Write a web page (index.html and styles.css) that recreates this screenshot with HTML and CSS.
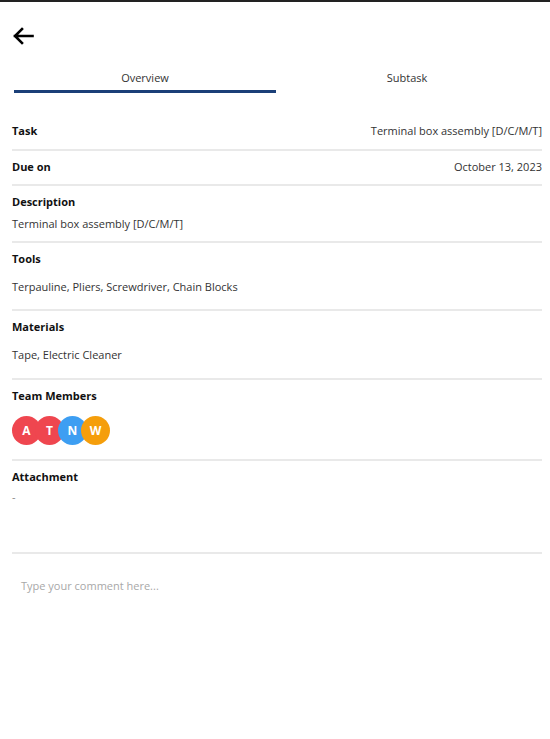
FILE: index.html
```html
<!DOCTYPE html>
<html>
<head>
<meta charset="utf-8">
<link rel="stylesheet" href="styles.css">
</head>
<body>
<div class="page">
  <header class="topbar">
    <button class="back" aria-label="Back">
      <svg width="22" height="18" viewBox="0 0 22 18"><path d="M20.5 9H3M10 2L3 9l7 7" fill="none" stroke="#000" stroke-width="2.6" stroke-linecap="square"/></svg>
    </button>
  </header>
  <nav class="tabs">
    <div class="tab active">Overview</div>
    <div class="tab">Subtask</div>
  </nav>
  <section class="details">
    <div class="row inline first">
      <div class="label">Task</div>
      <div class="value">Terminal box assembly [D/C/M/T]</div>
    </div>
    <div class="row inline">
      <div class="label">Due on</div>
      <div class="value">October 13, 2023</div>
    </div>
    <div class="row stack desc">
      <div class="label">Description</div>
      <div class="value">Terminal box assembly [D/C/M/T]</div>
    </div>
    <div class="row stack">
      <div class="label">Tools</div>
      <div class="value">Terpauline, Pliers, Screwdriver, Chain Blocks</div>
    </div>
    <div class="row stack materials">
      <div class="label">Materials</div>
      <div class="value">Tape, Electric Cleaner</div>
    </div>
    <div class="row stack team">
      <div class="label">Team Members</div>
      <div class="avatars">
        <span class="avatar red">A</span>
        <span class="avatar red">T</span>
        <span class="avatar blue">N</span>
        <span class="avatar orange">W</span>
      </div>
    </div>
    <div class="row stack attach">
      <div class="label">Attachment</div>
      <div class="value muted">-</div>
    </div>
  </section>
  <div class="comment">Type your comment here...</div>
</div>
</body>
</html>
```
FILE: styles.css
```css
* { box-sizing: border-box; }
html, body { margin: 0; padding: 0; background: #fff; }
body {
  font-family: "Open Sans", "Noto Sans", sans-serif;
  font-size: 11px;
  color: #222;
  border-top: 2px solid #222;
  height: 739px;
}
.page { padding: 0 8px 0 12px; }
.topbar { padding-top: 25px; }
.back {
  border: 0; background: none; padding: 0; margin: 0;
  width: 22px; height: 18px; display: block;
}
.back svg { display: block; }
.tabs {
  display: flex;
  margin: 25px 4px 0 2px;
}
.tab {
  flex: 1;
  text-align: center;
  font-size: 11px;
  color: #333;
  padding-bottom: 4px;
  border-bottom: 3px solid transparent;
  line-height: 16px;
}
.tab.active { border-bottom-color: #1b3f78; }
.details { margin-top: 22px; }
.row { border-bottom: 2px solid #e9e9e9; }
.row.inline {
  display: flex;
  justify-content: space-between;
  align-items: center;
  padding: 9px 0 10px;
}
.row.inline.first { padding-bottom: 11px; }
.row.stack { padding: 9px 0 15px; }
.label { font-weight: 700; color: #111; line-height: 14px; }
.value { color: #333; line-height: 14px; }
.row.stack .value { margin-top: 14px; }
.row.desc { padding-bottom: 10px; }
.row.desc .value { margin-top: 8px; }
.row.materials { padding-bottom: 16px; }
.avatars { display: flex; margin-top: 13px; }
.row.team { padding-bottom: 14px; }
.avatar {
  width: 29px; height: 29px; border-radius: 50%;
  color: #fff; font-weight: 700; font-size: 12px;
  display: flex; align-items: center; justify-content: center;
  margin-right: -6px;
}
.red { background: #ef464f; }
.blue { background: #3d9ef2; }
.orange { background: #f59e0b; }
.row.attach { padding-bottom: 48px; }
.row.attach .value { margin-top: 6px; }
.muted { color: #888; }
.comment {
  color: #a8a8a8;
  padding: 25px 0 0 9px;
  line-height: 14px;
  font-size: 11px;
}
```
